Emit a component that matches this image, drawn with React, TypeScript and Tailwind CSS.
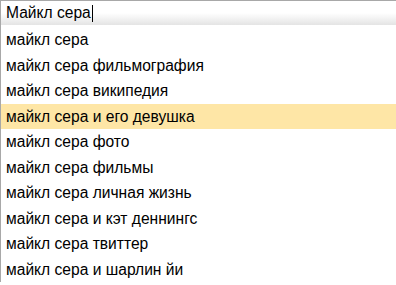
const suggestions = [
  "майкл сера",
  "майкл сера фильмография",
  "майкл сера википедия",
  "майкл сера и его девушка",
  "майкл сера фото",
  "майкл сера фильмы",
  "майкл сера личная жизнь",
  "майкл сера и кэт деннингс",
  "майкл сера твиттер",
  "майкл сера и шарлин йи",
];

export default function App() {
  return (
    <div className="h-[285px] w-[396px] overflow-hidden bg-white font-['Liberation_Sans',Arial,sans-serif] text-[15.6px] text-black">
      {/* Search input */}
      <div className="flex h-[25px] items-center border-t border-l border-[#a8a8a8] bg-gradient-to-b from-white via-white to-[#e4e4e4] pl-[5px]">
        <span>Майкл сера</span>
        <span className="ml-px h-[17px] w-px bg-black" />
      </div>

      {/* Suggestions */}
      <ul className="border-l border-[#a8a8a8] pt-[2px]">
        {suggestions.map((s, i) => (
          <li
            key={s}
            className={`flex h-[25.5px] items-center pl-[5px] ${
              i === 3 ? "bg-[#fee6a6]" : ""
            }`}
          >
            {s}
          </li>
        ))}
      </ul>
    </div>
  );
}
